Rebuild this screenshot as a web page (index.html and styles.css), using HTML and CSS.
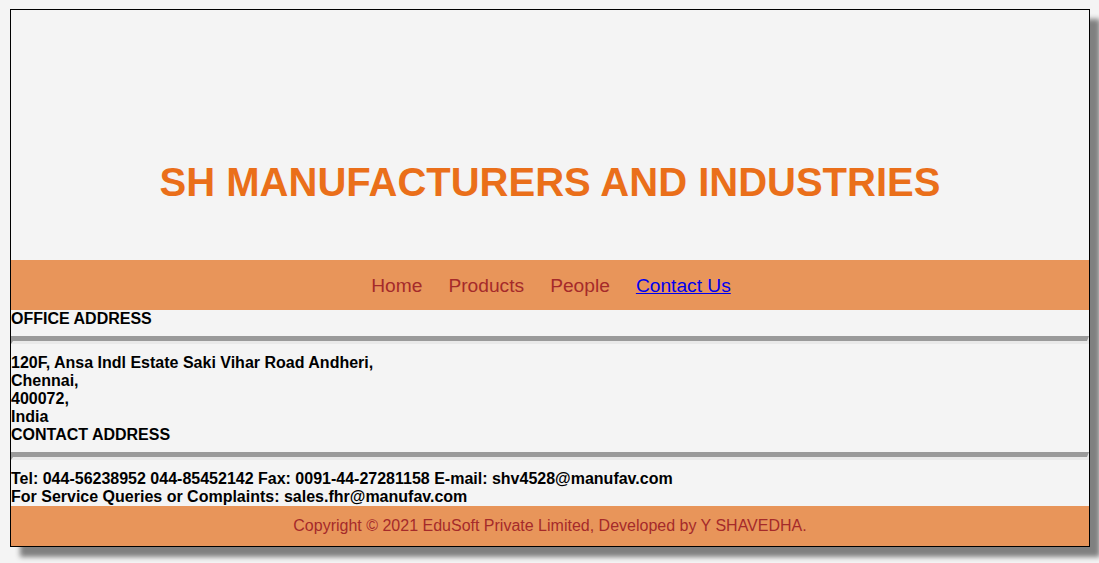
FILE: index.html
```html
<!DOCTYPE html>
<html>
<head>
<meta charset="utf-8">
<title>SH Manufacturers and Industries</title>
<link rel="stylesheet" href="styles.css">
</head>
<body>
<div class="page">
  <header class="masthead">
    <h1 class="title">SH MANUFACTURERS AND INDUSTRIES</h1>
  </header>
  <nav class="nav">
    <a class="nav-link" href="#">Home</a>
    <a class="nav-link" href="#">Products</a>
    <a class="nav-link" href="#">People</a>
    <a class="nav-link current" href="#">Contact Us</a>
  </nav>
  <main class="content">
    <div class="heading">OFFICE ADDRESS</div>
    <hr class="rule">
    <div class="lines">
      <div>120F, Ansa Indl Estate Saki Vihar Road Andheri,</div>
      <div>Chennai,</div>
      <div>400072,</div>
      <div>India</div>
    </div>
    <div class="heading">CONTACT ADDRESS</div>
    <hr class="rule">
    <div class="lines">
      <div>Tel: 044-56238952 044-85452142 Fax: 0091-44-27281158 E-mail: shv4528@manufav.com</div>
      <div>For Service Queries or Complaints: sales.fhr@manufav.com</div>
    </div>
  </main>
  <footer class="footer">Copyright © 2021 EduSoft Private Limited, Developed by Y SHAVEDHA.</footer>
</div>
</body>
</html>
```

FILE: styles.css
```css
html, body {
  margin: 0;
  padding: 0;
  background: #f4f4f4;
}
html {
  height: 100%;
}
body {
  min-height: 100%;
  font-family: "Liberation Sans", Arial, sans-serif;
}
.page {
  box-sizing: border-box;
  width: 1080px;
  margin: 9px 0 0 10px;
  border: 1px solid #000;
  background: #f4f4f4;
  box-shadow: 10px 10px 5px #808080;
}
.masthead {
  box-sizing: border-box;
  height: 250px;
  padding-top: 149px;
  text-align: center;
}
.title {
  margin: 0;
  font-size: 40px;
  line-height: 46px;
  font-weight: bold;
  color: #ea6f1a;
}
.nav {
  height: 50px;
  background: #e8955a;
  display: flex;
  justify-content: center;
  align-items: center;
  gap: 26px;
  padding-left: 2px;
  padding-top: 2px;
  box-sizing: border-box;
}
.nav-link {
  font-size: 19.2px;
  color: #a52a2a;
  text-decoration: none;
}
.nav-link.current {
  color: #0000ee;
  text-decoration: underline;
}
.content {
  font-size: 16px;
  line-height: 18px;
  font-weight: bold;
  color: #000;
}
.rule {
  margin: 8px 0 10px;
  height: 0;
  border: 0;
  border-top: 5px solid #9a9a9a;
  border-bottom: 3px solid #e9e9e9;
  border-left: 2px solid #9a9a9a;
  border-right: 2px solid #e9e9e9;
}
.footer {
  height: 40px;
  background: #e8955a;
  color: #a52a2a;
  font-size: 16px;
  display: flex;
  align-items: center;
  justify-content: center;
}
```
